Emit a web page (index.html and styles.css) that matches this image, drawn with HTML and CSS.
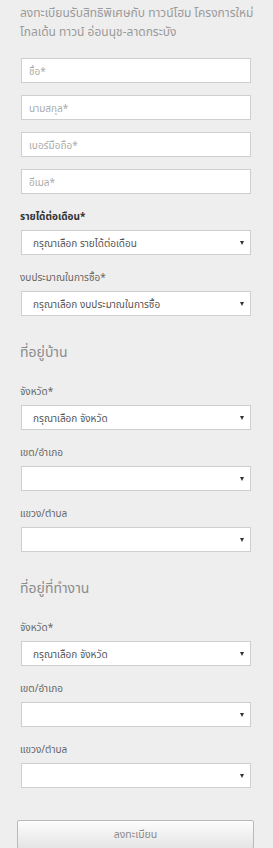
FILE: index.html
```html
<!DOCTYPE html>
<html lang="th">
<head>
  <meta charset="UTF-8" />
  <meta name="viewport" content="width=device-width, initial-scale=1.0"/>
  <title>ลงทะเบียน - โกลเด้น ทาวน์ อ่อนนุช-ลาดกระบัง</title>
  <link rel="stylesheet" href="styles.css">
</head>
<body>
  <form class="register" onsubmit="return false">
    <p class="intro">ลงทะเบียนรับสิทธิพิเศษกับ ทาวน์โฮม โครงการใหม่ โกลเด้น ทาวน์ อ่อนนุช-ลาดกระบัง</p>

    <input type="text" class="text-field" placeholder="ชื่อ*">
    <input type="text" class="text-field" placeholder="นามสกุล*">
    <input type="tel" class="text-field" placeholder="เบอร์มือถือ*">
    <input type="email" class="text-field" placeholder="อีเมล*">

    <label class="field-label bold">รายได้ต่อเดือน*</label>
    <div class="select-wrap">
      <select><option>กรุณาเลือก รายได้ต่อเดือน</option></select>
    </div>

    <label class="field-label">งบประมาณในการซื้อ*</label>
    <div class="select-wrap">
      <select><option>กรุณาเลือก งบประมาณในการซื้อ</option></select>
    </div>

    <h4 class="section-title">ที่อยู่บ้าน</h4>
    <label class="field-label">จังหวัด*</label>
    <div class="select-wrap">
      <select><option>กรุณาเลือก จังหวัด</option></select>
    </div>
    <label class="field-label">เขต/อำเภอ</label>
    <div class="select-wrap"><select><option></option></select></div>
    <label class="field-label">แขวง/ตำบล</label>
    <div class="select-wrap"><select><option></option></select></div>

    <h4 class="section-title">ที่อยู่ที่ทำงาน</h4>
    <label class="field-label">จังหวัด*</label>
    <div class="select-wrap">
      <select><option>กรุณาเลือก จังหวัด</option></select>
    </div>
    <label class="field-label">เขต/อำเภอ</label>
    <div class="select-wrap"><select><option></option></select></div>
    <label class="field-label">แขวง/ตำบล</label>
    <div class="select-wrap"><select><option></option></select></div>

    <button type="submit" class="submit-btn">ลงทะเบียน</button>
  </form>
</body>
</html>
```

FILE: styles.css
```css
body {
  margin: 0;
  background: #eeeeee;
  font-family: "Noto Sans", "Noto Sans Thai", sans-serif;
}
.register {
  padding: 3px 22px 0 21px;
}
.intro {
  margin: 0 -12px 17px -1px;
  font-size: 12px;
  line-height: 19px;
  color: #9a9a9a;
}
.text-field {
  display: block;
  box-sizing: border-box;
  width: 100%;
  height: 25px;
  margin: 0 0 12px;
  padding: 0 7px;
  border: 1px solid #cfcfcf;
  background: #fff;
  font-family: inherit;
  font-size: 10px;
  color: #555;
  outline: none;
}
.text-field::placeholder {
  color: #ababab;
}
.register .text-field:nth-of-type(4) {
  margin-bottom: 14px;
}
.field-label {
  display: block;
  margin: 0 0 6px -1px;
  font-size: 10px;
  line-height: 16px;
  color: #666;
}
.field-label.bold {
  font-weight: bold;
  color: #333;
}
.select-wrap {
  position: relative;
  margin-bottom: 14px;
}
.select-wrap::after {
  content: "";
  position: absolute;
  right: 7px;
  top: 11px;
  border-left: 2.5px solid transparent;
  border-right: 2.5px solid transparent;
  border-top: 4px solid #333;
  pointer-events: none;
}
.select-wrap select {
  display: block;
  box-sizing: border-box;
  width: 100%;
  height: 25px;
  padding: 0 20px 0 11px;
  border: 1px solid #cfcfcf;
  border-radius: 0;
  background: #fff;
  font-family: inherit;
  font-size: 10px;
  color: #555;
  -webkit-appearance: none;
  appearance: none;
  outline: none;
}
.section-title {
  margin: 26px 0 21px -1px;
  font-size: 14px;
  line-height: 20px;
  font-weight: normal;
  color: #8c8c8c;
}
.submit-btn {
  display: block;
  box-sizing: border-box;
  width: 237px;
  height: 29px;
  margin: 32px 0 0 -4px;
  border: 1px solid #b9b9b9;
  border-radius: 2px;
  background: linear-gradient(#fdfdfd, #e4e4e4);
  font-family: inherit;
  font-size: 10.5px;
  color: #8a8a8a;
  cursor: pointer;
}
```
